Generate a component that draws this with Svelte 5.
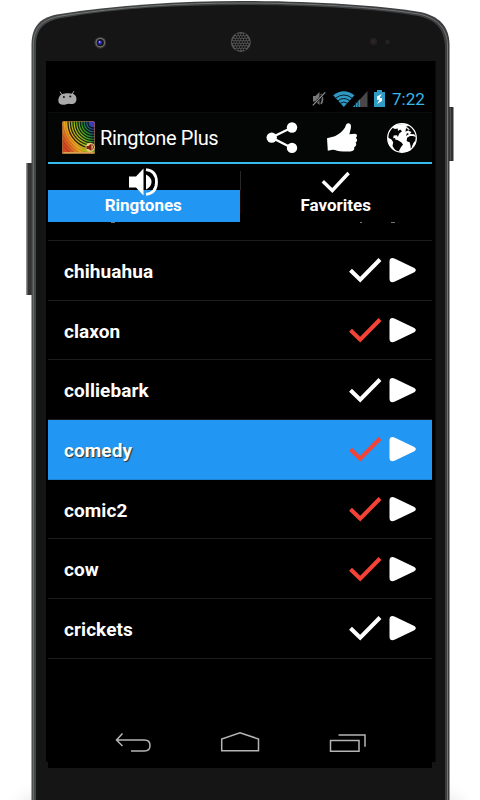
<script lang="ts">
	const tracks = [
		{ name: 'chihuahua', favorite: false },
		{ name: 'claxon', favorite: true },
		{ name: 'colliebark', favorite: false },
		{ name: 'comedy', favorite: true },
		{ name: 'comic2', favorite: true },
		{ name: 'cow', favorite: true },
		{ name: 'crickets', favorite: false },
	];

	// ripples on the launcher icon, spreading from its top right corner
	const ripples = Array.from({ length: 14 }, (_, i) => 5 + i * 2.5);

	// speaker grille holes
	const holes: { x: number; y: number }[] = [];
	for (let row = -3; row <= 3; row++) {
		for (let col = -3; col <= 3; col++) {
			const x = col * 2.7 + (row % 2 ? 1.35 : 0);
			const y = row * 2.5;
			if (x * x + y * y < 76) holes.push({ x, y });
		}
	}

	let selected = $state('comedy');
	let tab = $state('Ringtones');
</script>

<div class="stage">
	<svg class="body" viewBox="0 0 480 800" aria-hidden="true">
		<defs>
			<linearGradient id="rim" x1="31" x2="450" y1="0" y2="0" gradientUnits="userSpaceOnUse">
				<stop offset="0" stop-color="#444647" />
				<stop offset="0.5" stop-color="#3c3e3d" />
				<stop offset="1" stop-color="#3d3d40" />
			</linearGradient>
			<radialGradient id="floor">
				<stop offset="0" stop-color="#dedede" />
				<stop offset="1" stop-color="#fff" stop-opacity="0" />
			</radialGradient>
		</defs>
		<ellipse cx="34" cy="812" rx="32" ry="34" fill="url(#floor)" />
		<ellipse cx="447" cy="812" rx="32" ry="34" fill="url(#floor)" />
		<rect x="26.5" y="163" width="6" height="132" fill="#343434" />
		<path d="M27 163v132" stroke="#858585" />
		<path d="M449 107h4.500v54h-4.500z" fill="#303030" />
		<path d="M450.500 108v52" stroke="#505050" />
		<path d="M31.500 810V44C32 25 41 17 60 14C117 5 180 1 240 1C310 1 375 5 420 12C439 16 449 26 449.500 44V810z" fill="url(#rim)" />
		<path d="M33.300 810V44C34 27 43 19 61 16C118 7 180 3 240 3C310 3 375 7 419 14C437 18 446.500 28 447.500 44V810" fill="none" stroke="#77797a" stroke-width="0.9" />
		<path d="M36 810V46C36 29 44 21 62 18C118 8 180 5 240 5C310 5 374 9 418 16C436 20 444 29 445 46V810z" fill="#151515" />
		<path d="M46 61H435.500V762H432V768H48V762H46z" fill="#000" />
		<circle cx="100.300" cy="42.700" r="6" fill="#343332" />
		<circle cx="100.300" cy="42.700" r="4.800" fill="#77736f" />
		<circle cx="100.300" cy="42.700" r="3.600" fill="#14141d" />
		<circle cx="100" cy="42.700" r="2.100" fill="#2929b5" />
		<circle cx="99.600" cy="41.900" r="0.800" fill="#b6b6f5" />
		<g transform="translate(240.800 42)">
			<circle r="10" fill="#555" />
			{#each holes as hole}
				<circle cx={hole.x} cy={hole.y} r="1.050" fill="#111" />
			{/each}
		</g>
		<circle cx="373.500" cy="41.500" r="3.700" fill="#241f20" />
		<circle cx="373.500" cy="41.500" r="1.800" fill="#2e2526" />
		<circle cx="387.500" cy="42" r="2.300" fill="#222" />
	</svg>

	<main class="screen">
		<header class="status">
			<svg class="robot" width="19" height="15" viewBox="0 0 19 15">
				<path d="M2.200 1l2 3M15.700 .5l-1.700 3" stroke="#aaa" stroke-width="1" stroke-linecap="round" />
				<path d="M4 3.200C7 2 12 2 15 2.800C18 4 19 7 18.200 10C17 13.500 13 13.300 11 12.700C9 12.500 8 14 4.500 13.800C0 13.500-.2 9 .8 7C1.300 5 2.500 3.800 4 3.200z" fill="#aaa" />
				<circle cx="5.900" cy="6" r="1" fill="#111" /><circle cx="12.300" cy="5.400" r="1" fill="#111" />
			</svg>
			<div class="indicators">
				<svg width="14" height="16" viewBox="0 0 14 16">
					<path d="M1 5h2.500L7.500 1v13L3.500 10.500H1z" fill="#777" />
					<path d="M9 3q3 5 0 10" fill="none" stroke="#777" stroke-width="1.700" />
					<path d="M1 14.500L13 1.500" stroke="#000" stroke-width="2.400" /><path d="M.8 14.300L13.200 1.300" stroke="#999" stroke-width="1.100" />
				</svg>
				<svg class="wifi" width="22" height="16" viewBox="0 0 22 16">
					<path d="M.2 4.200Q10.800-3.800 21.400 4.200L10.800 16z" fill="#2f99c4" />
					<path d="M2.500 7.200Q10.800 .8 19.200 7.200M4.900 9.800Q10.800 5.200 16.800 9.800M7.200 12.300Q10.800 9.800 14.500 12.300" fill="none" stroke="#061d28" stroke-width="1" />
				</svg>
				<svg class="signal" width="15" height="16" viewBox="0 0 15 16">
					<path d="M14.500 0V16H0z" fill="#484848" /><path d="M7 8.300V16H0z" fill="#2f99c4" />
					<path d="M2.500 11v5M5 9v7" stroke="#0b3040" stroke-width=".8" />
				</svg>
				<svg class="battery" width="11" height="17" viewBox="0 0 11 17">
					<path d="M3 0h5v2h3v15H0V2h3z" fill="#309bc5" /><path d="M7.800 4L3 6.500v3.300h2.500L3 14l5-3V8H5.500z" fill="#fff" />
				</svg>
				<span class="clock">7:22</span>
			</div>
		</header>

		<div class="actionbar">
			<svg class="logo" width="33" height="33" viewBox="0 0 33 33">
				<defs>
					<linearGradient id="rainbow" x1="1" y1="0" x2="0" y2="0.550">
						<stop offset="0" stop-color="#5a24c4" /><stop offset=".17" stop-color="#2b47b5" />
						<stop offset=".34" stop-color="#22962c" /><stop offset=".55" stop-color="#a3c01c" />
						<stop offset=".75" stop-color="#efa522" /><stop offset="1" stop-color="#d44522" />
					</linearGradient>
					<clipPath id="logo-clip"><rect width="33" height="33" rx="2" /></clipPath>
				</defs>
				<g clip-path="url(#logo-clip)">
					<rect width="33" height="33" fill="url(#rainbow)" />
					{#each ripples as radius, i}
						<circle cx="31" cy="2" r={radius} fill="none" stroke="#080b05" stroke-width={i < 9 ? 1.3 : 0.6} opacity={i < 9 ? 0.85 : 0.3} />
					{/each}
					<path d="M0 32h33" stroke="#dba250" stroke-width="2" />
				</g>
				<rect x=".5" y=".5" width="32" height="32" rx="2" fill="none" stroke="#9c6739" stroke-width=".7" />
				<circle cx="28.200" cy="26.300" r="4.600" fill="#e7cc79" />
				<path d="M24.500 25h2l3-2.500v7.500l-3-2h-2z" fill="#821c13" /><path d="M30.500 23.500q2 2.500 0 5" fill="none" stroke="#821c13" />
			</svg>
			<h1>Ringtone Plus</h1>
			<div class="actions">
				<button aria-label="Share">
					<svg width="32" height="32" viewBox="0 0 32 32">
						<path d="M26 5.500L5.500 15.500L26 26" fill="none" stroke="#fff" stroke-width="2.300" />
						<circle cx="5.700" cy="15.600" r="5.200" fill="#fff" /><circle cx="26" cy="5.500" r="5.200" fill="#fff" /><circle cx="26" cy="25.900" r="5.200" fill="#fff" />
					</svg>
				</button>
				<button aria-label="Like">
					<svg width="32" height="32" viewBox="0 0 32 32">
						<path d="M1 16.200L8.800 14.200C13 12.500 17 9 19 5.500C20 3 20.200 1.500 22 1.300C25 1 25.400 4 24.800 6.500L23.400 12.300L29 11.800C31.400 12 31.600 14.800 29.800 15.900C31.800 17 31.300 19.700 29.500 20.500C31 22 30 24.500 28.200 25.200C28.800 27.800 27 29.300 24.500 29.400L17 29.600C12 29.600 9 27.500 6.500 27.700L1.800 28.800z" fill="#fff" />
					</svg>
				</button>
				<button aria-label="Web">
					<svg width="32" height="32" viewBox="0 0 32 32">
						<circle cx="16" cy="16" r="14.300" fill="#050505" stroke="#fff" stroke-width="1.300" />
						<path d="M6 5.500L9.500 3L13 2.200L19 2.100L23.200 4L20 4.600L23.800 7.200L22.300 8.800L25.500 10L24 12L28.200 12.300L30 15L27 13.900L24 14L21.200 15.700L20.600 19L23.500 20L24.500 23.500L25 28L20 30L15.600 30.300L12.600 29.500L14.800 25.500L17 22.500L15.500 20.500L11.500 18L9.500 17.800L9 16L7.200 16.200L7.600 13.500L11 13.200L11.800 14.900L13.300 11.600L16 9.200L14.200 7.600L12 8.900L11.700 6.600L9 7z" fill="#fff" />
						<path d="M2 15.500L5.500 17.500L7.200 20.300L6.500 24L9.600 29C5 27 1.500 22 2 15.500zM30 17L29 22L25.500 27L26.800 21.500L29 19z" fill="#fff" />
						<path d="M20 6l3 2-3.500 1.800zM21 11l2 1-3 2zM21.500 16l5-1.500 2.500 3-2.500 5.500-2-3-3-.5z" fill="#050505" />
					</svg>
				</button>
			</div>
		</div>

		<nav class="tabs">
			<button class="tab" class:active={tab === 'Ringtones'} onclick={() => (tab = 'Ringtones')}>
				<svg width="31" height="28" viewBox="0 0 31 28">
					<path d="M1 8.500h7l7.500-8v27l-7.500-8H1z" fill="#fff" />
					<path d="M18 6.500Q23.500 9 23.500 14T18 21.500z" fill="#fff" />
					<path d="M18 1.700C25 2.500 28.500 7 28.500 14S25 25.500 18 26.300" fill="none" stroke="#fff" stroke-width="2.800" />
				</svg>
				<span>Ringtones</span>
			</button>
			<button class="tab" class:active={tab === 'Favorites'} onclick={() => (tab = 'Favorites')}>
				<svg width="31" height="28" viewBox="0 0 31 28">
					<path d="M2.800 13.300l9.500 9.200L28.600 5" fill="none" stroke="#fff" stroke-width="3.400" />
				</svg>
				<span>Favorites</span>
			</button>
		</nav>

		<!-- bottom edge of the row scrolled under the tabs -->
		<div class="cut"><i class="tail"></i><i class="dot"></i><i class="edge"></i></div>

		<ul class="tracks">
			{#each tracks as track}
				<li class:selected={selected === track.name}>
					<button class="name" onclick={() => (selected = track.name)}>{track.name}</button>
					<button class="check" class:favorite={track.favorite} aria-label="Favorite">
						<svg width="34" height="28" viewBox="0 0 34 28">
							<path d="M2.500 14.200l9.700 9.500L32 3.500" fill="none" stroke="currentColor" stroke-width="4.100" />
						</svg>
					</button>
					<button class="play" aria-label="Play">
						<svg width="28" height="26" viewBox="0 0 28 26">
							<path d="M.5 4.500C.5 1 3 .3 6 1.700L24.800 10.800C27.500 12.200 27.500 14.200 24.800 15.500L6 24.500C3 25.900 .5 25.200 .5 21.700z" fill="#fff" />
						</svg>
					</button>
				</li>
			{/each}
		</ul>

		<footer class="navbar">
			<svg width="36" height="22" viewBox="0 0 36 22"><path d="M7.500 1.500L1.500 8l6 6M2 8H29.500C33.500 8 35 10.500 35 13.500S33.500 19 29.500 19H16" /></svg>
			<svg width="40" height="22" viewBox="0 0 40 22"><path d="M1.700 18.800V7L20 .8L38.500 7V18.800z" /></svg>
			<svg width="38" height="22" viewBox="0 0 38 22"><path d="M1.500 8.500H30V19.200H1.500zM9.500 3H36V14.800" /></svg>
		</footer>
	</main>
</div>

<style>
	:global(body) {
		background: #fff;
	}

	.stage {
		position: relative;
		width: 480px;
		height: 800px;
		overflow: hidden;
		box-sizing: border-box;
		padding: 80px 48px 32px;
		font-family: Roboto, sans-serif;
		color: #fff;
	}

	.body {
		position: absolute;
		inset: 0;
		width: 480px;
		height: 800px;
	}

	.screen {
		position: relative;
		width: 384px;
		height: 688px;
		display: flex;
		flex-direction: column;
	}

	svg {
		display: block;
		flex-shrink: 0;
	}

	button {
		padding: 0;
		border: 0;
		background: none;
		color: inherit;
		font: inherit;
		cursor: pointer;
	}

	.status {
		height: 32px;
		flex-shrink: 0;
		box-sizing: border-box;
		padding: 10px 7px 0 10px;
		display: flex;
		justify-content: space-between;
		align-items: flex-start;
	}

	.robot {
		margin-top: 1px;
	}

	.indicators {
		display: flex;
		align-items: flex-start;
	}

	.indicators svg {
		margin-top: 1px;
	}

	.indicators .wifi {
		margin-left: 7px;
	}

	.indicators .signal {
		margin-left: -2px;
	}

	.indicators .battery {
		margin: 0 7px 0 6px;
	}

	.clock {
		font-size: 17px;
		line-height: 19px;
		width: 33px;
		color: #38b7e8;
	}

	.actionbar {
		height: 52px;
		flex-shrink: 0;
		box-sizing: border-box;
		padding: 0 14px;
		display: flex;
		align-items: center;
		background: #040505;
		border-top: 1px solid #0c0c0c;
		border-bottom: 2px solid #35bced;
	}

	.logo {
		margin-bottom: 1px;
	}

	h1 {
		margin: 1px 0 0 5px;
		font-size: 20px;
		font-weight: 400;
		letter-spacing: -0.33px;
	}

	.actions {
		margin-left: auto;
		display: flex;
		gap: 28px;
	}

	.tabs {
		height: 58px;
		flex-shrink: 0;
		display: flex;
	}

	.tab {
		flex: 1;
		display: flex;
		flex-direction: column;
		align-items: center;
		padding: 4px 1px 0 0;
		font-size: 17px;
		font-weight: 700;
	}

	.tab span {
		line-height: 19px;
	}

	.tab.active {
		background: linear-gradient(#000 26px, #2196f3 26px);
	}

	.tab + .tab {
		border-left: 1px solid #242424;
		border-image: linear-gradient(transparent 8px, #282828 8px 26px, #220800 26px 49px, transparent 49px) 1;
	}

	.cut {
		height: 18px;
		flex-shrink: 0;
		border-bottom: 1px solid #1c1c1c;
		display: flex;
	}

	.cut i {
		height: 1px;
		background: #777;
	}

	.tail {
		width: 4px;
		margin-left: 63px;
	}

	.dot {
		width: 2px;
		margin-left: 245px;
	}

	.edge {
		width: 4px;
		margin-left: 29px;
	}

	.tracks {
		list-style: none;
		margin: 0;
		padding: 0;
	}

	li {
		height: 59.7px;
		box-sizing: border-box;
		border-bottom: 1px solid #1c1c1c;
		padding: 0 15px 0 16px;
		display: flex;
		align-items: center;
	}

	li.selected {
		background: #2196f3;
		border-color: #1d83d4;
	}

	.name {
		flex: 1;
		text-align: left;
		font-size: 19px;
		font-weight: 700;
		line-height: 24px;
		letter-spacing: 0.08px;
		padding-top: 3px;
	}

	.selected .name {
		text-shadow: 1px 1px 1px #333;
	}

	.check {
		margin-right: 7px;
	}

	.check.favorite {
		color: #f44336;
	}

	.navbar {
		height: 36px;
		margin-top: auto;
		padding: 0 65px 0 67px;
		display: flex;
		justify-content: space-between;
	}

	.navbar path {
		fill: none;
		stroke: #b5b5b5;
		stroke-width: 1.5;
	}
</style>
